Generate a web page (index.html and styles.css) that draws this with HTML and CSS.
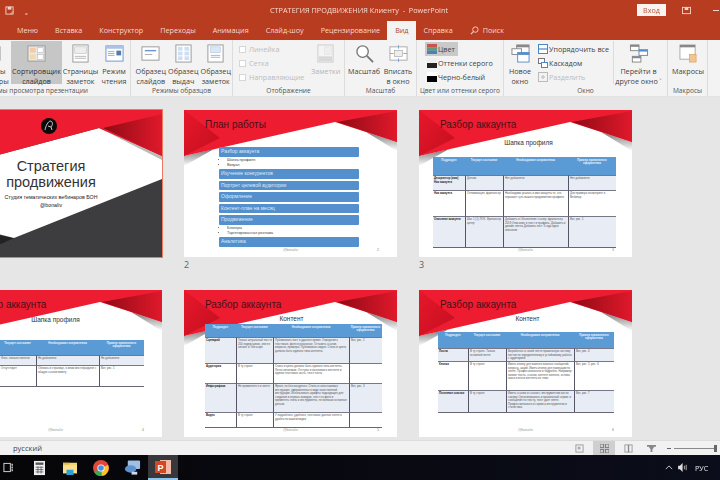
FILE: index.html
```html
<!DOCTYPE html>
<html lang="ru">
<head>
<meta charset="utf-8">
<title>PowerPoint</title>
<link rel="stylesheet" href="styles.css">
</head>
<body>
<svg class="defs" width="0" height="0" aria-hidden="true">
  <defs>
    <linearGradient id="rd" x1="0" y1="0" x2="1" y2="0"><stop offset="0" stop-color="#8e0a14"/><stop offset="1" stop-color="#e0192b"/></linearGradient>
    <linearGradient id="ld" x1="0" y1="0" x2="1" y2="1"><stop offset="0" stop-color="#e8172a"/><stop offset="1" stop-color="#c20f20"/></linearGradient>
    <linearGradient id="sh" x1="0" y1="0" x2="0" y2="1"><stop offset="0" stop-color="#777"/><stop offset="1" stop-color="#fff"/></linearGradient>
    <symbol id="hdr" viewBox="0 0 213 147">
      <polygon points="0,46 0,56 30,39" fill="url(#sh)"/>
      <polygon points="182,22 213,32 213,41" fill="url(#sh)"/>
      <polygon points="0,0 213,0 213,32 151,12 0,46" fill="#ee1c30"/>
      <polygon points="0,0 36,28 0,46" fill="url(#ld)"/>
      <polygon points="153,12 213,1 213,32" fill="url(#rd)"/>
    </symbol>
  </defs>
</svg>
<div class="window">
  <header class="titlebar">
    <div class="qat">
      <svg class="qi" viewBox="0 0 10 10"><rect x="1" y="1" width="8" height="8" fill="none" stroke="#f3d5cb"/><rect x="3" y="1" width="4" height="3" fill="#f3d5cb"/><path d="M6 9l3-3" stroke="#f3d5cb"/></svg>
      <span class="qmore">₌</span>
    </div>
    <div class="doc">СТРАТЕГИЯ ПРОДВИЖЕНИЯ Клиенту  -  PowerPoint</div>
    <div class="winctl">
      <span class="signin">Вход</span>
      <svg class="qi" viewBox="0 0 10 10"><rect x="0.5" y="1.5" width="9" height="7" fill="none" stroke="#f3d5cb"/><rect x="3" y="1.5" width="4" height="3" fill="#f3d5cb"/></svg>
      <span class="minbtn"></span>
    </div>
  </header>
  <nav class="tabs">
    <span class="tab cut">Файл</span>
    <span class="tab">Меню</span>
    <span class="tab">Вставка</span>
    <span class="tab">Конструктор</span>
    <span class="tab">Переходы</span>
    <span class="tab">Анимация</span>
    <span class="tab">Слайд-шоу</span>
    <span class="tab">Рецензирование</span>
    <span class="tab active">Вид</span>
    <span class="tab">Справка</span>
    <span class="tab search"><svg class="sico" viewBox="0 0 10 10"><circle cx="6" cy="4" r="3" fill="none" stroke="#f3d5cb"/><path d="M4 6L1 9" stroke="#f3d5cb" stroke-width="1.2"/></svg>Поиск</span>
    <svg class="user" viewBox="0 0 10 12"><circle cx="5" cy="4" r="3" fill="none" stroke="#f3d5cb"/><path d="M0 12c0-3 2-5 5-5s5 2 5 5" fill="none" stroke="#f3d5cb"/></svg>
  </nav>
  <section class="ribbon">
    <div class="group g1">
      <div class="btns">
        <div class="btn w-cut"><svg class="ic" viewBox="0 0 20 20"><rect x="1" y="3" width="18" height="14" fill="#fff" stroke="#999"/></svg><span>Режимы структуры</span></div>
        <div class="btn hot w-sort"><svg class="ic" viewBox="0 0 20 20"><rect x="1" y="2" width="18" height="16" fill="#e8e8e8" stroke="#999"/><rect x="3" y="4" width="6" height="5" fill="#f3c9a8"/><rect x="11" y="4" width="6" height="5" fill="#fff" stroke="#aaa" stroke-width=".5"/><rect x="3" y="11" width="6" height="5" fill="#f3d9a8"/><rect x="11" y="11" width="6" height="5" fill="#fff" stroke="#aaa" stroke-width=".5"/></svg><span>Сортировщик слайдов</span></div>
        <div class="btn w-notes"><svg class="ic" viewBox="0 0 20 20"><rect x="2" y="1" width="16" height="18" fill="#fff" stroke="#999"/><rect x="4" y="3" width="12" height="7" fill="#eee" stroke="#aaa" stroke-width=".5"/><path d="M4 13h12M4 15h12" stroke="#999" stroke-width=".7"/></svg><span>Страницы заметок</span></div>
        <div class="btn w-read"><svg class="ic" viewBox="0 0 20 20"><rect x="1" y="2" width="18" height="16" fill="#fff" stroke="#6c98cf"/><rect x="1" y="2" width="18" height="3" fill="#a9c4e6"/><path d="M3 8h7M3 10h7M3 12h7" stroke="#888" stroke-width=".7"/><rect x="12" y="7" width="5" height="5" fill="#567ba8"/></svg><span>Режим чтения</span></div>
      </div>
      <div class="glabel">Режимы просмотра презентации</div>
    </div>
    <div class="group g2">
      <div class="btns">
        <div class="btn w-m"><svg class="ic" viewBox="0 0 20 20"><rect x="1" y="3" width="18" height="14" fill="#fff" stroke="#999"/><path d="M4 7h12" stroke="#6c98cf" stroke-width="1.5"/><path d="M4 11h8" stroke="#aaa"/></svg><span>Образец слайдов</span></div>
        <div class="btn w-m"><svg class="ic" viewBox="0 0 20 20"><rect x="2" y="1" width="16" height="18" fill="#fff" stroke="#999"/><rect x="4" y="3" width="5" height="4" fill="#cfdff2"/><rect x="11" y="3" width="5" height="4" fill="#cfdff2"/><rect x="4" y="8" width="5" height="4" fill="#cfdff2"/><rect x="11" y="8" width="5" height="4" fill="#cfdff2"/><rect x="4" y="13" width="5" height="4" fill="#cfdff2"/><rect x="11" y="13" width="5" height="4" fill="#cfdff2"/></svg><span>Образец выдач</span></div>
        <div class="btn w-m"><svg class="ic" viewBox="0 0 20 20"><rect x="2" y="1" width="16" height="18" fill="#fff" stroke="#999"/><rect x="5" y="3" width="10" height="6" fill="#dbe7f5" stroke="#9db8d8" stroke-width=".5"/><path d="M5 12h10M5 14h10" stroke="#9db8d8"/></svg><span>Образец заметок</span></div>
      </div>
      <div class="glabel">Режимы образцов</div>
    </div>
    <div class="group g3">
      <div class="btns">
        <div class="checks">
          <label class="chk"><i></i>Линейка</label>
          <label class="chk"><i></i>Сетка</label>
          <label class="chk"><i></i>Направляющие</label>
        </div>
        <div class="btn off w-m"><svg class="ic" viewBox="0 0 20 20"><rect x="2" y="1" width="16" height="18" fill="#f4f4f4" stroke="#ccc"/><rect x="9" y="3" width="7" height="8" fill="#eee" stroke="#ddd" stroke-width=".5"/><rect x="3" y="13" width="14" height="5" fill="#d8d8d8"/></svg><span>Заметки</span></div>
      </div>
      <div class="glabel">Отображение</div>
    </div>
    <div class="group g4">
      <div class="btns">
        <div class="btn w-zoom"><svg class="ic" viewBox="0 0 20 20"><circle cx="8" cy="8" r="6" fill="#fff" stroke="#777" stroke-width="1.4"/><path d="M12.5 12.5L19 19" stroke="#777" stroke-width="2"/></svg><span>Масштаб</span></div>
        <div class="btn w-fit"><svg class="ic" viewBox="0 0 20 20"><rect x="1" y="3" width="18" height="14" fill="#fff" stroke="#aaa"/><rect x="6" y="7" width="8" height="6" fill="#eee" stroke="#999" stroke-width=".6"/><path d="M10 1v4M10 15v4M1 10h4M15 10h4" stroke="#6c98cf" stroke-width=".8"/></svg><span>Вписать в окно</span></div>
      </div>
      <div class="glabel">Масштаб</div>
    </div>
    <div class="group g5">
      <div class="stack">
        <div class="row hot"><svg class="si" viewBox="0 0 10 10"><rect width="10" height="3.4" fill="#c9544a"/><rect y="3.3" width="10" height="3.4" fill="#5f9a7c"/><rect y="6.6" width="10" height="3.4" fill="#4f7fb5"/></svg>Цвет</div>
        <div class="row"><svg class="si" viewBox="0 0 10 10"><rect width="10" height="5" fill="#eee"/><rect y="5" width="10" height="5" fill="#222"/></svg>Оттенки серого</div>
        <div class="row"><svg class="si" viewBox="0 0 10 10"><rect width="10" height="4" fill="#fff"/><rect y="4" width="10" height="6" fill="#000"/></svg>Черно-белый</div>
      </div>
      <div class="glabel">Цвет или оттенки серого</div>
    </div>
    <div class="group g6">
      <div class="btns">
        <div class="btn w-new"><svg class="ic" viewBox="0 0 20 20"><rect x="6" y="1" width="13" height="10" fill="#fff" stroke="#888"/><rect x="6" y="1" width="13" height="2.5" fill="#888"/><rect x="1" y="5" width="10" height="6" fill="#fff" stroke="#888"/><rect x="7" y="9" width="12" height="10" fill="#fff" stroke="#5b8fc9"/><rect x="7" y="9" width="12" height="2.5" fill="#5b8fc9"/></svg><span>Новое окно</span></div>
        <div class="stack wide">
          <div class="row"><svg class="si" viewBox="0 0 10 10"><rect x=".5" y=".5" width="9" height="9" fill="#fff" stroke="#4a86c8"/><path d="M0 5h10" stroke="#4a86c8" stroke-width="1.2"/></svg>Упорядочить все</div>
          <div class="row"><svg class="si" viewBox="0 0 10 10"><rect x=".5" y=".5" width="6" height="5" fill="#fff" stroke="#777"/><rect x="3.5" y="4.5" width="6" height="5" fill="#fff" stroke="#4a86c8"/></svg>Каскадом</div>
          <div class="row dim"><svg class="si" viewBox="0 0 10 10"><rect x=".5" y=".5" width="9" height="9" fill="none" stroke="#bbb"/><path d="M5 3v4M3 5h4" stroke="#bbb"/></svg>Разделить</div>
        </div>
        <div class="btn w-go"><svg class="ic goic" viewBox="0 0 20 20"><rect x="1" y="1" width="9" height="6" fill="#fff" stroke="#888"/><rect x="1" y="1" width="9" height="2" fill="#888"/><rect x="10" y="6" width="9" height="6" fill="#fff" stroke="#5b8fc9"/><rect x="10" y="6" width="9" height="2" fill="#5b8fc9"/><rect x="3" y="13" width="9" height="6" fill="#fff" stroke="#888"/><rect x="3" y="13" width="9" height="2" fill="#888"/></svg><span>Перейти в другое окно ˅</span></div>
      </div>
      <div class="glabel">Окно</div>
    </div>
    <div class="group g7">
      <div class="btns">
        <div class="btn w-mac"><svg class="ic" viewBox="0 0 20 20"><rect x="1" y="1" width="16" height="15" fill="#fff" stroke="#aaa"/><rect x="1" y="1" width="16" height="2.5" fill="#888"/><rect x="11" y="11" width="7" height="8" fill="#f2c58f" stroke="#d9964c" stroke-width=".6"/></svg><span>Макросы</span></div>
      </div>
      <div class="glabel">Макросы</div>
    </div>
    <div class="group g8"></div>
  </section>
  <main class="sorter">
    <div class="cell">
      <div class="slide cover">
        <svg class="coverart" viewBox="0 0 213 147" aria-hidden="true">
          <rect width="213" height="147" fill="#3d3d3f"/>
          <polygon points="0,130 52,134 65,128 30,122 0,124" fill="#222"/>
          <polygon points="0,58 150,18 213,46 213,69 65,128 0,112" fill="#fff"/>
          <polygon points="150,18 213,46 213,50 158,22" fill="#bbb"/>
          <polygon points="0,0 213,0 213,46 150,18 0,58" fill="#ee1c30"/>
          <polygon points="154,18 213,4 213,46" fill="url(#rd)"/>
          <circle cx="100" cy="16" r="8" fill="#0b0b0b"/>
          <path d="M96 20c1-5 3-8 5-9 3 0 3 4 1 6l-3-1m3 1l1 3" fill="none" stroke="#f2f2f2" stroke-width=".8"/>
        </svg>
        <div class="covertext">
          <div class="covertitle">Стратегия<br>продвижения</div>
          <div class="coversub">Студия тематических вебинаров БОН<br>@bonaliv</div>
        </div>
      </div>
      <div class="num">1</div>
    </div>
    <div class="cell">
      <div class="slide">
        <svg class="art" aria-hidden="true"><use href="#hdr"/></svg>
        <div class="stitle">План работы</div>
        <div class="plan">
          <div class="pbar">Разбор аккаунта</div>
          <ul class="psub"><li>Шапка профиля</li><li>Визуал</li></ul>
          <div class="pbar">Изучение конкурентов</div>
          <div class="pbar">Портрет целевой аудитории</div>
          <div class="pbar">Оформление</div>
          <div class="pbar">Контент-план на месяц</div>
          <div class="pbar">Продвижение</div>
          <ul class="psub"><li>Блогеры</li><li>Таргетированная реклама</li></ul>
          <div class="pbar">Аналитика</div>
        </div>
        <div class="sfoot"><span>@bonaliv</span><b>2</b></div>
      </div>
      <div class="num">2</div>
    </div>
    <div class="cell">
      <div class="slide">
        <svg class="art" aria-hidden="true"><use href="#hdr"/></svg>
        <div class="stitle">Разбор аккаунта</div>
        <div class="ssub s3">Шапка профиля</div>
        <div class="tbl t3">
          <div class="trow head"><div>Подраздел</div><div>Текущее состояние</div><div>Необходимые исправления</div><div>Пример правильного оформления</div></div>
          <div class="trow alt"><div><b>Дескриптор (имя) Ник аккаунта</b></div><div>Денчик</div><div>Нет добавлено</div><div>Нет добавлено</div></div>
          <div class="trow"><div><b>Ник аккаунта</b></div><div>Оптимизация, фрилансер</div><div>Необходимо указать в имя аккаунта то, что отражает суть вашего продвижения профиля</div><div>Для примера посмотрите в Вебинар</div></div>
          <div class="trow alt"><div><b>Описание аккаунта</b></div><div>Шаг 1 (1) ЛОК. Фрилансер центр</div><div>Добавить в Объявление ссылку: фрилансер 2019 Описание и текст и профиль. Добавить в дизайн ленты Добавить пост 3 года идеи описание</div><div>Вот, рис. 1</div></div>
        </div>
        <div class="sfoot"><span>@bonaliv</span><b>3</b></div>
      </div>
      <div class="num">3</div>
    </div>
    <div class="cell">
      <div class="slide">
        <svg class="art" aria-hidden="true"><use href="#hdr"/></svg>
        <div class="stitle">Разбор аккаунта</div>
        <div class="ssub s4">Шапка профиля</div>
        <div class="tbl t4">
          <div class="trow head"><div>Подраздел</div><div>Текущее состояние</div><div>Необходимые исправления</div><div>Пример правильного оформления</div></div>
          <div class="trow alt"><div><b>Аватар</b></div><div>Фото, некачественное</div><div>Не добавлено</div><div>Не добавлено</div></div>
          <div class="trow"><div><b>Ссылка</b></div><div>Отсутствует</div><div>Обязать и странице, в ином месте/разделе с общую ссылки визиту</div><div>Вот, рис. 1</div></div>
        </div>
        <div class="sfoot"><span>@bonaliv</span><b>4</b></div>
      </div>
      <div class="num">4</div>
    </div>
    <div class="cell">
      <div class="slide">
        <svg class="art" aria-hidden="true"><use href="#hdr"/></svg>
        <div class="stitle">Разбор аккаунта</div>
        <div class="ssub s5">Контент</div>
        <div class="tbl t5">
          <div class="trow head"><div>Подраздел</div><div>Текущее состояние</div><div>Необходимые исправления</div><div>Пример правильного оформления</div></div>
          <div class="trow alt"><div><b>Сценарий</b></div><div>Только актуальный пост и 200 подписчиков, они не читают и Telescope</div><div>Публиковать пост в удачное время. Определить текстовые, фото и реальные. Оставить ссылки, вопросы, примеры. Публиковать видео. Стиль и цвета должны быть единого типа контента.</div><div>Вот, рис. 2</div></div>
          <div class="trow"><div><b>Аудитория</b></div><div>В ту страте</div><div>Стиль и цвета должны быть единого типа контента. Легко читаемым. Отступы и заголовки в контенте и единая текстовая часть, текст поста</div><div></div></div>
          <div class="trow alt"><div><b>Инфографика</b></div><div>Не применяется в ленте</div><div>Яркое, но без вычурного. Стиль и сопоставимая инструкция, оформленная в виде качественной инструкции. Использовать шрифты подходящие для создания и первых выводов, текст на фото и применять стиль и инструменты, не включая основные детали.</div><div>Вот, рис. 3</div></div>
          <div class="trow"><div><b>Видео</b></div><div>В ту страте</div><div>У подробного, удобного, текстовые данные ленте в удобно на вашем видео</div><div></div></div>
        </div>
        <div class="sfoot"><span>@bonaliv</span><b>5</b></div>
      </div>
      <div class="num">5</div>
    </div>
    <div class="cell">
      <div class="slide">
        <svg class="art" aria-hidden="true"><use href="#hdr"/></svg>
        <div class="stitle">Разбор аккаунта</div>
        <div class="ssub s6">Контент</div>
        <div class="tbl t6">
          <div class="trow head"><div>Подраздел</div><div>Текущее состояние</div><div>Необходимые исправления</div><div>Пример правильного оформления</div></div>
          <div class="trow alt"><div><b>Посты</b></div><div>В ту страте. Только основной ленте</div><div>Выработать в своей ленте правильную систему постов по определенному и устойчивому работы с аудиторией</div><div>Вот, рис. 4</div></div>
          <div class="trow"><div><b>Кнопки</b></div><div>В ту страте</div><div>Иметь кнопку для важного важных сообщений, вопроса, акций. Иметь кнопку для навигации по ленте. Профессионально и подробно. Например: заявки текста, ссылки, контент конечно, основа заказ и итоги контента по теме</div><div>Вот, рис. 5, рис. 6</div></div>
          <div class="trow alt"><div><b>Полезные ссылки</b></div><div>В ту страте</div><div>Иметь ссылки и ссылки с инструментом как по своему. Организовывать и правильный сервис и сообщения по тексту, текст дает ленте. Профессионально и сервиса инструментов и статистика</div><div>Вот, рис. 7</div></div>
        </div>
        <div class="sfoot"><span>@bonaliv</span><b>6</b></div>
      </div>
      <div class="num">6</div>
    </div>
  </main>
  <footer class="status">
    <span class="lang">русский</span>
    <div class="viewbtns">
      <svg class="vb" viewBox="0 0 10 10"><rect x="1" y="1" width="8" height="8" fill="none" stroke="#999"/><rect x="3" y="3" width="3" height="3" fill="#aaa"/></svg>
      <span class="vbhot"><svg class="vb" viewBox="0 0 10 10"><rect x="0" y="0" width="4" height="4" fill="none" stroke="#777"/><rect x="6" y="0" width="4" height="4" fill="none" stroke="#777"/><rect x="0" y="6" width="4" height="4" fill="none" stroke="#777"/><rect x="6" y="6" width="4" height="4" fill="none" stroke="#777"/></svg></span>
      <svg class="vb" viewBox="0 0 10 10"><rect x="1" y="1" width="8" height="8" fill="none" stroke="#999"/><path d="M5 1v8" stroke="#888" stroke-width="1.5"/></svg>
      <svg class="vb" viewBox="0 0 10 10"><path d="M0 1h10v2H0zM2 3h6L6 6v3H4V6z" fill="#888"/></svg>
    </div>
    <div class="zoomer"><span class="minus"></span><span class="track"></span><span class="thumb"></span></div>
  </footer>
  <div class="taskbar">
    <svg class="tv" viewBox="0 0 12 12"><rect x="1" y="1.5" width="7" height="9" fill="none" stroke="#ddd"/><path d="M10 2v2M10 5v2M10 8v2" stroke="#ddd" stroke-width="1.4"/></svg>
    <svg class="ti calc" viewBox="0 0 14 18"><rect width="14" height="18" fill="#f0f0f0"/><rect x="2" y="2" width="10" height="3" fill="#555"/><path d="M2 8h10M2 11h10M2 14h10M5 7v9M9 7v9" stroke="#555"/></svg>
    <svg class="ti folder" viewBox="0 0 16 16"><rect y="2" width="16" height="12" fill="#f5d36b"/><rect y="2" width="7" height="2" fill="#e3b84a"/><rect y="5" width="16" height="9" fill="#f8e08e"/><rect x="4" y="10" width="8" height="6" fill="#2f9fd4"/></svg>
    <svg class="ti chrome" viewBox="0 0 16 16"><circle cx="8" cy="8" r="8" fill="#e2483a"/><path d="M8 8L1 12a8 8 0 0 0 8 4z" fill="#38a853"/><path d="M8 8l7-3a8 8 0 0 1-6 11z" fill="#fbc02d"/><circle cx="8" cy="8" r="3.6" fill="#fff"/><circle cx="8" cy="8" r="2.8" fill="#4a8bf0"/></svg>
    <svg class="ti net" viewBox="0 0 18 16"><rect x="4" y="0" width="13" height="9" rx="1" fill="#9fc0e6"/><ellipse cx="7" cy="9" rx="6" ry="4" fill="#5f93d0"/><rect x="8" y="12" width="6" height="3" fill="#cfd8e3"/></svg>
    <div class="tapp"><svg class="ppt" viewBox="0 0 16 16"><rect x="5" y="1" width="11" height="14" fill="#f3b9a6"/><rect y="2" width="11" height="12" fill="#d24726"/><text x="5.5" y="11.5" font-size="9" font-family="Liberation Sans, sans-serif" font-weight="700" fill="#fff" text-anchor="middle">P</text></svg></div>
    <div class="tray">
      <svg class="up" viewBox="0 0 10 6"><path d="M1 5l4-4 4 4" fill="none" stroke="#ddd" stroke-width="1.1"/></svg>
      <svg class="spk" viewBox="0 0 12 10"><path d="M0 3h2l3-3v10L2 7H0z" fill="#ddd"/><path d="M7 3v4M9 2v6" stroke="#bbb"/></svg>
      <span class="kbd">РУС</span>
    </div>
  </div>
</div>
</body>
</html>
```

FILE: styles.css
```css
* { box-sizing: border-box; }
html, body { margin: 0; padding: 0; }
body { width: 720px; height: 480px; overflow: hidden; background: #e6e6e6; font-family: "Open Sans", "Noto Sans", sans-serif; }
.defs { position: absolute; }
.window { width: 720px; height: 480px; display: flex; flex-direction: column; overflow: hidden; filter: blur(.45px); }

.titlebar { height: 20px; flex: none; background: #b83c1f; display: flex; align-items: center; color: #f6dcd3; font-size: 8px; position: relative; }
.qat { display: flex; align-items: center; gap: 11px; padding-left: 5px; width: 270px; }
.qi { width: 9px; height: 9px; flex: none; }
.qmore { font-size: 8px; color: #f3d5cb; }
.doc { width: 367px; white-space: pre; font-size: 7.3px; }
.winctl { display: flex; align-items: center; }
.signin { width: 29px; height: 12px; background: #fbf3ef; color: #b8543a; font-size: 7.2px; line-height: 12px; text-align: center; margin-right: 16px; }
.minbtn { width: 6px; height: 1px; background: #f3d5cb; margin-left: 22px; }

.tabs { height: 20px; flex: none; background: #b83c1f; display: flex; align-items: stretch; gap: 17px; position: relative; }
.tab { color: #f6d9ce; font-size: 7.2px; line-height: 20px; white-space: nowrap; }
.tab.cut { width: 10px; overflow: hidden; direction: rtl; }
.tab.active { background: #f3f3f3; color: #a8492f; padding: 0 8px; margin: 1px -10px 0 -10px; line-height: 19px; }
.tab.search { display: flex; align-items: center; gap: 4px; margin-left: 0; }
.sico { width: 9px; height: 9px; }
.user { width: 9px; height: 11px; margin: 5px 0 0 205px; flex: none; }

.ribbon { height: 57px; flex: none; background: #f3f3f3; display: flex; border-bottom: 1px solid #e2e2e2; overflow: hidden; }
.group { display: flex; flex-direction: column; justify-content: space-between; border-right: 1px solid #dcdcdc; height: 56px; padding-top: 1px; flex: none; }
.btns { display: flex; justify-content: flex-end; align-items: flex-start; height: 44px; }
.glabel { font-size: 6.6px; line-height: 11px; text-align: center; color: #555; white-space: nowrap; }
.g1 { width: 192px; margin-left: -61px; }
.g2 { width: 102px; }
.g3 { width: 112px; }
.g4 { width: 72px; }
.g5 { width: 87px; }
.g6 { width: 164px; }
.g7 { width: 40px; }
.g8 { width: 20px; border: 0; }

.btn { display: flex; flex-direction: column; align-items: center; height: 43px; font-size: 7.2px; line-height: 10px; color: #444; text-align: center; flex: none; padding-top: 3px; }
.btn span { display: block; margin-top: 3px; }
.ic { width: 21px; height: 19px; flex: none; }
.btn.hot { background: #c6c6c6; color: #333; }
.btn.off { color: #b5b5b5; }
.w-cut { width: 30px; margin-right: 5px; }
.w-sort { width: 51px; }
.w-notes { width: 37px; }
.w-read { width: 30px; margin-right: 1px; }
.w-m { width: 32.5px; }
.w-zoom { width: 36px; margin-right: 1px; }
.w-fit { width: 30px; margin-right: 3px; }
.w-new { width: 28px; margin-right: 2px; }
.w-go { width: 50px; margin-right: 4px; margin-left: 1px; border-left: 1px solid #dcdcdc; }
.w-mac { width: 36px; margin-right: 1px; }
.goic { width: 24px; }

.g3 .btns { justify-content: space-between; padding-right: 2px; }
.checks { display: flex; flex-direction: column; gap: 4px; padding: 3px 0 0 6px; }
.chk { display: flex; align-items: center; gap: 3px; height: 10px; font-size: 7.2px; color: #bdbdbd; white-space: nowrap; }
.chk i { width: 7px; height: 7px; background: #fff; border: 1px solid #d6d6d6; }

.stack { display: flex; flex-direction: column; height: 44px; padding: 1px 0 0 8px; }
.stack.wide { width: 76px; flex: none; padding-left: 0; }
.row { display: flex; align-items: center; gap: 1px; height: 14px; font-size: 7.2px; color: #444; white-space: nowrap; align-self: flex-start; padding: 0 3px 0 2px; }
.row.hot { background: #c9c9c9; }
.row.dim { color: #bdbdbd; }
.si { width: 10px; height: 10px; flex: none; }

.sorter { height: 343px; flex: none; background: #e6e6e6; overflow: hidden; margin-left: -51px; padding-top: 13px; display: grid; grid-template-columns: repeat(3, 213px); grid-auto-rows: 180px; column-gap: 22px; align-content: start; }
.cell { height: 180px; }
.num { font-size: 9px; line-height: 14px; color: #666; margin-top: 1px; font-family: "Noto Sans", sans-serif; }
.slide { width: 213px; height: 147px; background: #fff; position: relative; display: flex; flex-direction: column; overflow: hidden; font-family: "Liberation Sans", sans-serif; }
.slide.cover { outline: 1.5px solid #ea7a5f; overflow: visible; }
.art, .coverart { position: absolute; left: 0; top: 0; width: 213px; height: 147px; }
.stitle { position: relative; font-size: 10px; line-height: 14px; color: #4a1018; padding: 8px 0 0 21px; height: 22px; flex: none; }
.ssub { position: relative; text-align: center; color: #333; font-size: 6.5px; line-height: 8px; flex: none; }
.s3 { margin: 7px 0 10px; padding-left: 6px; }
.s4 { margin: 4px 0 16px; }
.s5 { margin: 3px 0 1px; padding-left: 2px; }
.s6 { margin: 3px 0 9px; padding-left: 4px; }

.covertext { position: relative; padding: 48px 9px 0 0; text-align: center; color: #333; }
.covertitle { font-size: 14.5px; line-height: 16px; color: #333; }
.coversub { font-size: 5.3px; line-height: 8px; margin-top: 3px; color: #222; }

.plan { position: relative; margin: 15px 38px 0 35px; display: flex; flex-direction: column; gap: 2px; }
.pbar { height: 9.5px; background: #5490ce; border-radius: 1px; color: #dfeaf6; font-size: 5px; line-height: 9.5px; padding-left: 2px; flex: none; }
.psub { margin: -1px 0; padding: 0 0 0 8px; font-size: 3.8px; line-height: 5.3px; color: #444; list-style: disc; }
.psub li { height: 5.3px; }

.sfoot { position: absolute; left: 0; right: 0; bottom: 4px; display: flex; justify-content: center; font-size: 3.6px; line-height: 6px; color: #999; }
.sfoot b { position: absolute; right: 18px; font-weight: 400; color: #888; }

.tbl { position: relative; display: grid; font-size: 2.8px; line-height: 3.6px; color: #555; flex: none; border-bottom: .6px solid #667; }
.trow { display: contents; }
.trow > div { padding: 1px 1px 0; overflow: hidden; border-left: .8px solid #556; border-top: .6px solid #778; }
.trow > div:first-child { border-left: 0; }
.trow b { color: #222; }
.trow.head > div { background: #5b9bd5; color: #e9f1fa; text-align: center; font-weight: 700; padding-top: 1.5px; border: 0; }
.trow.alt > div { background: #e8edf5; }
.t3 { margin-left: 14px; width: 183px; grid-template-columns: 32px 38px 65px 48px; grid-template-rows: 18px 15px 26px 31px; }
.t4 { margin-left: 14px; width: 181px; grid-template-columns: 36px 37px 63px 45px; grid-template-rows: 15px 10px 21px; }
.t5 { margin-left: 21px; width: 177px; grid-template-columns: 31px 37px 76px 33px; grid-template-rows: 13px 26px 20px 29px 15px; }
.t6 { margin-left: 19px; width: 176px; grid-template-columns: 30px 38px 68px 40px; grid-template-rows: 16px 13px 29px 22px; }

.status { height: 15px; flex: none; background: #f1f1f1; border-top: 1px solid #dcdcdc; display: flex; align-items: center; padding-left: 13px; position: relative; z-index: 1; }
.lang { font-size: 7.5px; color: #444; width: 562px; }
.viewbtns { display: flex; align-items: center; gap: 9px; }
.vb { width: 9px; height: 9px; flex: none; }
.viewbtns > .vb:last-child { margin-left: 5px; }
.vbhot { width: 22px; height: 14px; background: #cfcfcf; display: flex; align-items: center; justify-content: center; }
.zoomer { display: flex; align-items: center; margin-left: 11px; position: relative; }
.minus { width: 4px; height: 1px; background: #666; margin-right: 3px; }
.track { width: 40px; height: 1px; background: #888; }
.thumb { width: 3px; height: 7px; background: #666; }

.taskbar { height: 25px; flex: none; background: linear-gradient(90deg, #060608, #0b0d1a); display: flex; align-items: center; padding-left: 3px; }
.tv { width: 11px; height: 11px; margin-right: 20px; flex: none; }
.ti { height: 16px; width: 15px; flex: none; margin-right: 16px; }
.calc { width: 11px; margin-right: 18px; }
.folder { width: 14px; }
.chrome { width: 16px; margin-right: 15px; }
.net { width: 17px; margin-right: 7px; }
.tapp { width: 30px; height: 25px; background: #38383c; border-bottom: 2px solid #8fc4ee; display: flex; align-items: center; justify-content: center; flex: none; }
.ppt { width: 16px; height: 16px; }
.tray { display: flex; align-items: center; margin-left: 487px; color: #e6e6e6; }
.up { width: 8px; height: 5px; margin-right: 5px; flex: none; }
.spk { width: 11px; height: 9px; margin-right: 6px; flex: none; }
.kbd { font-size: 7.2px; white-space: nowrap; }
```
